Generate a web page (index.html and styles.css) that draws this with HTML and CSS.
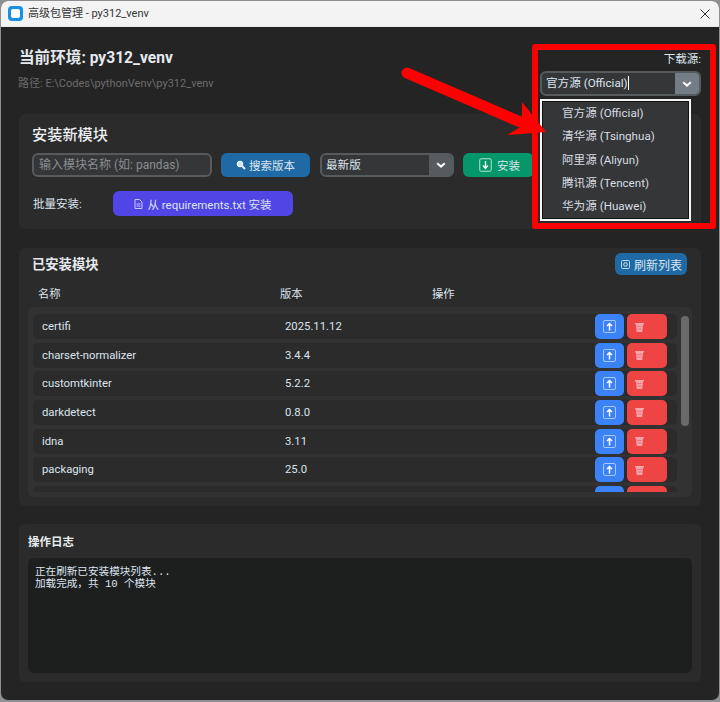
FILE: index.html
```html
<!DOCTYPE html>
<html lang="zh-CN">
<head>
<meta charset="utf-8">
<title>高级包管理 - py312_venv</title>
<link rel="stylesheet" href="styles.css">
</head>
<body>
<div class="window">
  <div class="titlebar">
    <span class="app-icon"><span class="app-icon-inner"></span></span>
    <span class="title-text">高级包管理 - py312_venv</span>
    <svg class="close" width="10" height="10" viewBox="0 0 10 10"><path d="M.5.5l9 9M9.5.5l-9 9" stroke="#333" stroke-width="1" fill="none"/></svg>
  </div>
  <div class="content">
    <header class="env">
      <div class="env-info">
        <div class="env-name">当前环境: py312_venv</div>
        <div class="env-path">路径: E:\Codes\pythonVenv\py312_venv</div>
      </div>
      <div class="source">
        <div class="source-label">下载源:</div>
        <div class="combo combo-source">
          <span class="combo-text">官方源 (Official)<span class="caret"></span></span>
          <span class="combo-arrow combo-arrow-hover"><svg width="10" height="6" viewBox="0 0 10 6"><path d="M1.2 1.2L5 4.6l3.8-3.4" stroke="#fff" stroke-width="2" fill="none"/></svg></span>
        </div>
      </div>
    </header>

    <section class="card install">
      <h2 class="install-title">安装新模块</h2>
      <div class="install-row">
        <div class="entry">输入模块名称 (如: pandas)</div>
        <div class="btn btn-search">
          <svg width="10" height="10" viewBox="0 0 10 10"><circle cx="4" cy="4" r="2.8" fill="#cfe2ef" stroke="#fff" stroke-width="1"/><path d="M6 6l3 3" stroke="#e8eef3" stroke-width="2"/></svg>
          <span>搜索版本</span>
        </div>
        <div class="combo combo-version">
          <span class="combo-text">最新版</span>
          <span class="combo-arrow"><svg width="10" height="6" viewBox="0 0 10 6"><path d="M1.2 1.2L5 4.6l3.8-3.4" stroke="#fff" stroke-width="2" fill="none"/></svg></span>
        </div>
        <div class="btn btn-install">
          <svg width="13" height="14" viewBox="0 0 13 14"><rect x=".75" y=".75" width="11.5" height="12.5" rx="1.5" fill="none" stroke="#b5e6d3" stroke-width="1"/><path d="M6.5 3v7M4 7.5l2.5 3 2.5-3" stroke="#fff" stroke-width="1.4" fill="none"/></svg>
          <span>安装</span>
        </div>
      </div>
      <div class="batch-row">
        <span class="batch-label">批量安装:</span>
        <div class="btn btn-batch">
          <svg width="9" height="10" viewBox="0 0 9 10"><path d="M1 .5h4.5L8 3v6.5H1z" fill="none" stroke="#c9c6f7" stroke-width="1"/><path d="M2.5 5h4M2.5 7h4" stroke="#c9c6f7" stroke-width="1"/></svg>
          <span>从 requirements.txt 安装</span>
        </div>
      </div>
    </section>

    <section class="card installed">
      <div class="installed-head">
        <h2 class="installed-title">已安装模块</h2>
        <div class="btn btn-refresh">
          <svg width="9" height="9" viewBox="0 0 9 9"><rect x=".5" y=".5" width="8" height="8" rx="1" fill="none" stroke="#bcd6ea" stroke-width="1"/><circle cx="4.5" cy="4.5" r="1.8" fill="none" stroke="#dcebf5" stroke-width="1"/></svg>
          <span>刷新列表</span>
        </div>
      </div>
      <div class="columns">
        <span class="col-name">名称</span>
        <span class="col-version">版本</span>
        <span>操作</span>
      </div>
      <div class="list">
        <div class="rows">
          <div class="row"><span class="row-name">certifi</span><span>2025.11.12</span><div class="actions"><div class="act act-up"><svg width="13" height="13" viewBox="0 0 13 13"><use href="#i-up"/></svg></div><div class="act act-del"><svg width="9" height="10" viewBox="0 0 9 10"><use href="#i-trash"/></svg></div></div></div>
          <div class="row"><span class="row-name">charset-normalizer</span><span>3.4.4</span><div class="actions"><div class="act act-up"><svg width="13" height="13" viewBox="0 0 13 13"><use href="#i-up"/></svg></div><div class="act act-del"><svg width="9" height="10" viewBox="0 0 9 10"><use href="#i-trash"/></svg></div></div></div>
          <div class="row"><span class="row-name">customtkinter</span><span>5.2.2</span><div class="actions"><div class="act act-up"><svg width="13" height="13" viewBox="0 0 13 13"><use href="#i-up"/></svg></div><div class="act act-del"><svg width="9" height="10" viewBox="0 0 9 10"><use href="#i-trash"/></svg></div></div></div>
          <div class="row"><span class="row-name">darkdetect</span><span>0.8.0</span><div class="actions"><div class="act act-up"><svg width="13" height="13" viewBox="0 0 13 13"><use href="#i-up"/></svg></div><div class="act act-del"><svg width="9" height="10" viewBox="0 0 9 10"><use href="#i-trash"/></svg></div></div></div>
          <div class="row"><span class="row-name">idna</span><span>3.11</span><div class="actions"><div class="act act-up"><svg width="13" height="13" viewBox="0 0 13 13"><use href="#i-up"/></svg></div><div class="act act-del"><svg width="9" height="10" viewBox="0 0 9 10"><use href="#i-trash"/></svg></div></div></div>
          <div class="row"><span class="row-name">packaging</span><span>25.0</span><div class="actions"><div class="act act-up"><svg width="13" height="13" viewBox="0 0 13 13"><use href="#i-up"/></svg></div><div class="act act-del"><svg width="9" height="10" viewBox="0 0 9 10"><use href="#i-trash"/></svg></div></div></div>
          <div class="row"><span class="row-name"></span><span></span><div class="actions"><div class="act act-up"></div><div class="act act-del"></div></div></div>
        </div>
        <div class="scrollbar"><div class="thumb"></div></div>
      </div>
    </section>

    <section class="card log">
      <h3 class="log-title">操作日志</h3>
      <div class="log-box">正在刷新已安装模块列表...<br>加载完成&#xFF0C;共 10 个模块</div>
    </section>
  </div>

  <svg class="defs" width="0" height="0">
    <symbol id="i-up" viewBox="0 0 13 13"><rect x=".5" y=".5" width="12" height="12" rx="1.5" fill="none" stroke="#a9c8fb" stroke-width="1"/><path d="M6.5 10.5V3.5M4 6l2.5-2.5L9 6" stroke="#fff" stroke-width="1.5" fill="none"/></symbol>
    <symbol id="i-trash" viewBox="0 0 9 10"><path d="M0 1h9v1.4H8L7.3 10H1.7L1 2.4H0z" fill="#f4a6ab"/><path d="M2.2 4.4h4.6M2.5 7h4" stroke="#ec6b70" stroke-width=".9"/></symbol>
  </svg>

  <div class="dropdown">
    <div>官方源 (Official)</div>
    <div>清华源 (Tsinghua)</div>
    <div>阿里源 (Aliyun)</div>
    <div>腾讯源 (Tencent)</div>
    <div>华为源 (Huawei)</div>
  </div>
  <div class="red-box"></div>
  <svg class="red-arrow" width="160" height="80" viewBox="0 0 160 80">
    <path d="M7 7L125 58" stroke="#fe0000" stroke-width="11" stroke-linecap="round" fill="none"/>
    <path d="M122 36L146 66 107 69 122 60z" fill="#fe0000"/>
  </svg>
</div>
</body>
</html>
```
FILE: styles.css
```css
* { box-sizing: border-box; }
html, body { margin: 0; padding: 0; }
body {
  width: 720px;
  height: 702px;
  overflow: hidden;
  background: #8d8f92;
  font-family: Roboto, "Noto Sans CJK SC", sans-serif;
  color: #dce4ee;
  font-size: 11.5px;
}
h2, h3 { margin: 0; }

.window {
  position: relative;
  margin: 1px 1px 0;
  width: 718px;
  height: 699px;
  border-radius: 7px;
  overflow: hidden;
  background: #242424;
  display: flex;
  flex-direction: column;
}
.titlebar {
  height: 26px;
  flex: none;
  background: #f3f3f3;
  display: flex;
  align-items: center;
  padding: 0 9px 0 7px;
  color: #333;
  border-bottom: 1px solid #e8e8e8;
}
.app-icon {
  width: 15px;
  height: 15px;
  border-radius: 4px;
  background: #1a8fe6;
  display: flex;
  align-items: center;
  justify-content: center;
}
.app-icon-inner {
  width: 9px;
  height: 9px;
  border-radius: 2px;
  background: #fff;
}
.title-text { margin-left: 5px; font-size: 11px; line-height: 14px; }
.close { margin-left: auto; }

.content {
  flex: 1;
  padding: 24px 18px 0;
  display: flex;
  flex-direction: column;
}

.env {
  display: flex;
  justify-content: space-between;
  height: 45px;
  margin-bottom: 18px;
}
.env-name {
  margin-top: -3px;
  font-size: 15.6px;
  line-height: 20px;
  font-weight: 700;
  color: #e4e9ee;
  height: 20px;
}
.env-path {
  margin-top: 8px;
  margin-left: -1px;
  font-size: 11px;
  line-height: 16px;
  color: #6c6c6c;
}
.source { display: flex; flex-direction: column; align-items: flex-end; }
.source-label { font-size: 11.5px; line-height: 14px; height: 20px; padding-top: 1px; color: #dce4ee; }

.combo {
  display: flex;
  background: #343638;
  border: 2px solid #565b5e;
  border-radius: 6px;
  overflow: hidden;
}
.combo-text { flex: 1; padding-left: 4px; line-height: 21px; font-size: 11.6px; white-space: nowrap; }
.combo-arrow {
  width: 24px;
  background: #565b5e;
  display: flex;
  align-items: center;
  justify-content: center;
}
.combo-arrow-hover { background: #747d85; }
.combo-source { width: 161px; height: 25px; }
.combo-version { width: 134px; height: 24px; }
.caret {
  display: inline-block;
  width: 1px;
  height: 14px;
  background: #fff;
  vertical-align: -3px;
}

.card { background: #2b2b2b; border-radius: 6px; width: 682px; flex: none; }

.install { height: 115px; padding: 11px 0 0 13px; margin-bottom: 19px; }
.install-title { font-size: 15.2px; line-height: 20px; font-weight: 500; color: #eceff2; margin-bottom: 8px; }
.install-row { display: flex; height: 24px; }
.entry {
  width: 180px;
  background: #343638;
  border: 2px solid #565b5e;
  border-radius: 6px;
  padding-left: 5px;
  line-height: 20px;
  font-size: 12px;
  color: #8a8d90;
}
.btn {
  border-radius: 6px;
  display: flex;
  align-items: center;
  justify-content: center;
  color: #dce4ee;
}
.btn-search { width: 89px; margin-left: 9px; background: #1f6aa5; gap: 3px; }
.combo-version { margin-left: 10px; }
.combo-version .combo-arrow { width: 23px; }
.btn-install { width: 71px; margin-left: 9px; background: #059669; gap: 5px; padding-left: 2px; }
.batch-row { display: flex; align-items: center; height: 25px; margin-top: 14px; }
.batch-label { width: 81px; padding-left: 1px; margin-bottom: 1px; }
.btn-batch { width: 180px; height: 25px; background: #4f46e5; gap: 4px; }

.installed { height: 258px; padding: 5px 9px 0; margin-bottom: 18px; }
.installed-head { display: flex; justify-content: space-between; height: 22px; padding: 0 5px 0 4px; align-items: center; }
.installed-title { font-size: 13.3px; line-height: 20px; font-weight: 700; color: #e6eaee; padding-top: 1px; }
.btn-refresh { width: 72px; height: 22px; background: #1f6aa5; gap: 4px; font-size: 12px; padding-left: 1px; }
.columns { display: flex; height: 16px; margin-top: 12px; padding-left: 10px; font-size: 11.3px; line-height: 16px; }
.col-name { width: 242px; }
.col-version { width: 152px; }
.list {
  margin-top: 4px;
  height: 190px;
  background: #323232;
  border-radius: 6px;
  display: flex;
  padding: 7px 3px 5px 5px;
}
.rows { flex: 1; display: flex; flex-direction: column; gap: 3.67px; overflow: hidden; }
.row {
  flex: none;
  height: 25px;
  display: flex;
  align-items: center;
  background: #2b2b2b;
  border-radius: 5px;
  padding-right: 10px;
  font-size: 11.3px;
}
.row-name { width: 252px; padding-left: 9px; }
.actions { margin-left: auto; display: flex; gap: 3px; height: 25px; }
.act { height: 25px; border-radius: 5px; display: flex; align-items: center; }
.act-up { width: 29px; background: #3b82f6; justify-content: center; }
.act-del { width: 40px; background: #ef4444; padding-left: 8px; }
.act-del svg, .act-up svg { flex: none; }
.scrollbar { width: 8px; margin-left: 4px; }
.thumb { margin-top: 2px; height: 110px; background: #6a6a6a; border-radius: 4px; }

.log { height: 158px; padding: 10px 9px 0; }
.log-title { font-size: 11.5px; line-height: 16px; font-weight: 700; color: #e6eaee; }
.log-box {
  margin-top: 8px;
  height: 115px;
  background: #1d1e1e;
  border-radius: 6px;
  padding: 8px 7px;
  font-family: "Liberation Mono", "Noto Sans CJK SC", monospace;
  font-size: 10.6px;
  line-height: 12px;
  color: #dce4ee;
}

.defs { position: absolute; }

.dropdown {
  position: absolute;
  left: 539px;
  top: 98px;
  width: 151px;
  height: 122px;
  background: #343638;
  border: 2px solid #f4f4f4;
  outline: 1px solid #111;
  outline-offset: -3px;
  padding: 1px 0 0 20px;
  font-size: 11.6px;
  color: #d8dde2;
}
.dropdown div { height: 23.3px; line-height: 23.3px; white-space: nowrap; }
.red-box {
  position: absolute;
  left: 531px;
  top: 43px;
  width: 184px;
  height: 185px;
  border: 6px solid #fe0000;
  border-radius: 3px;
  pointer-events: none;
}
.red-arrow { position: absolute; left: 399px; top: 65px; }
```
